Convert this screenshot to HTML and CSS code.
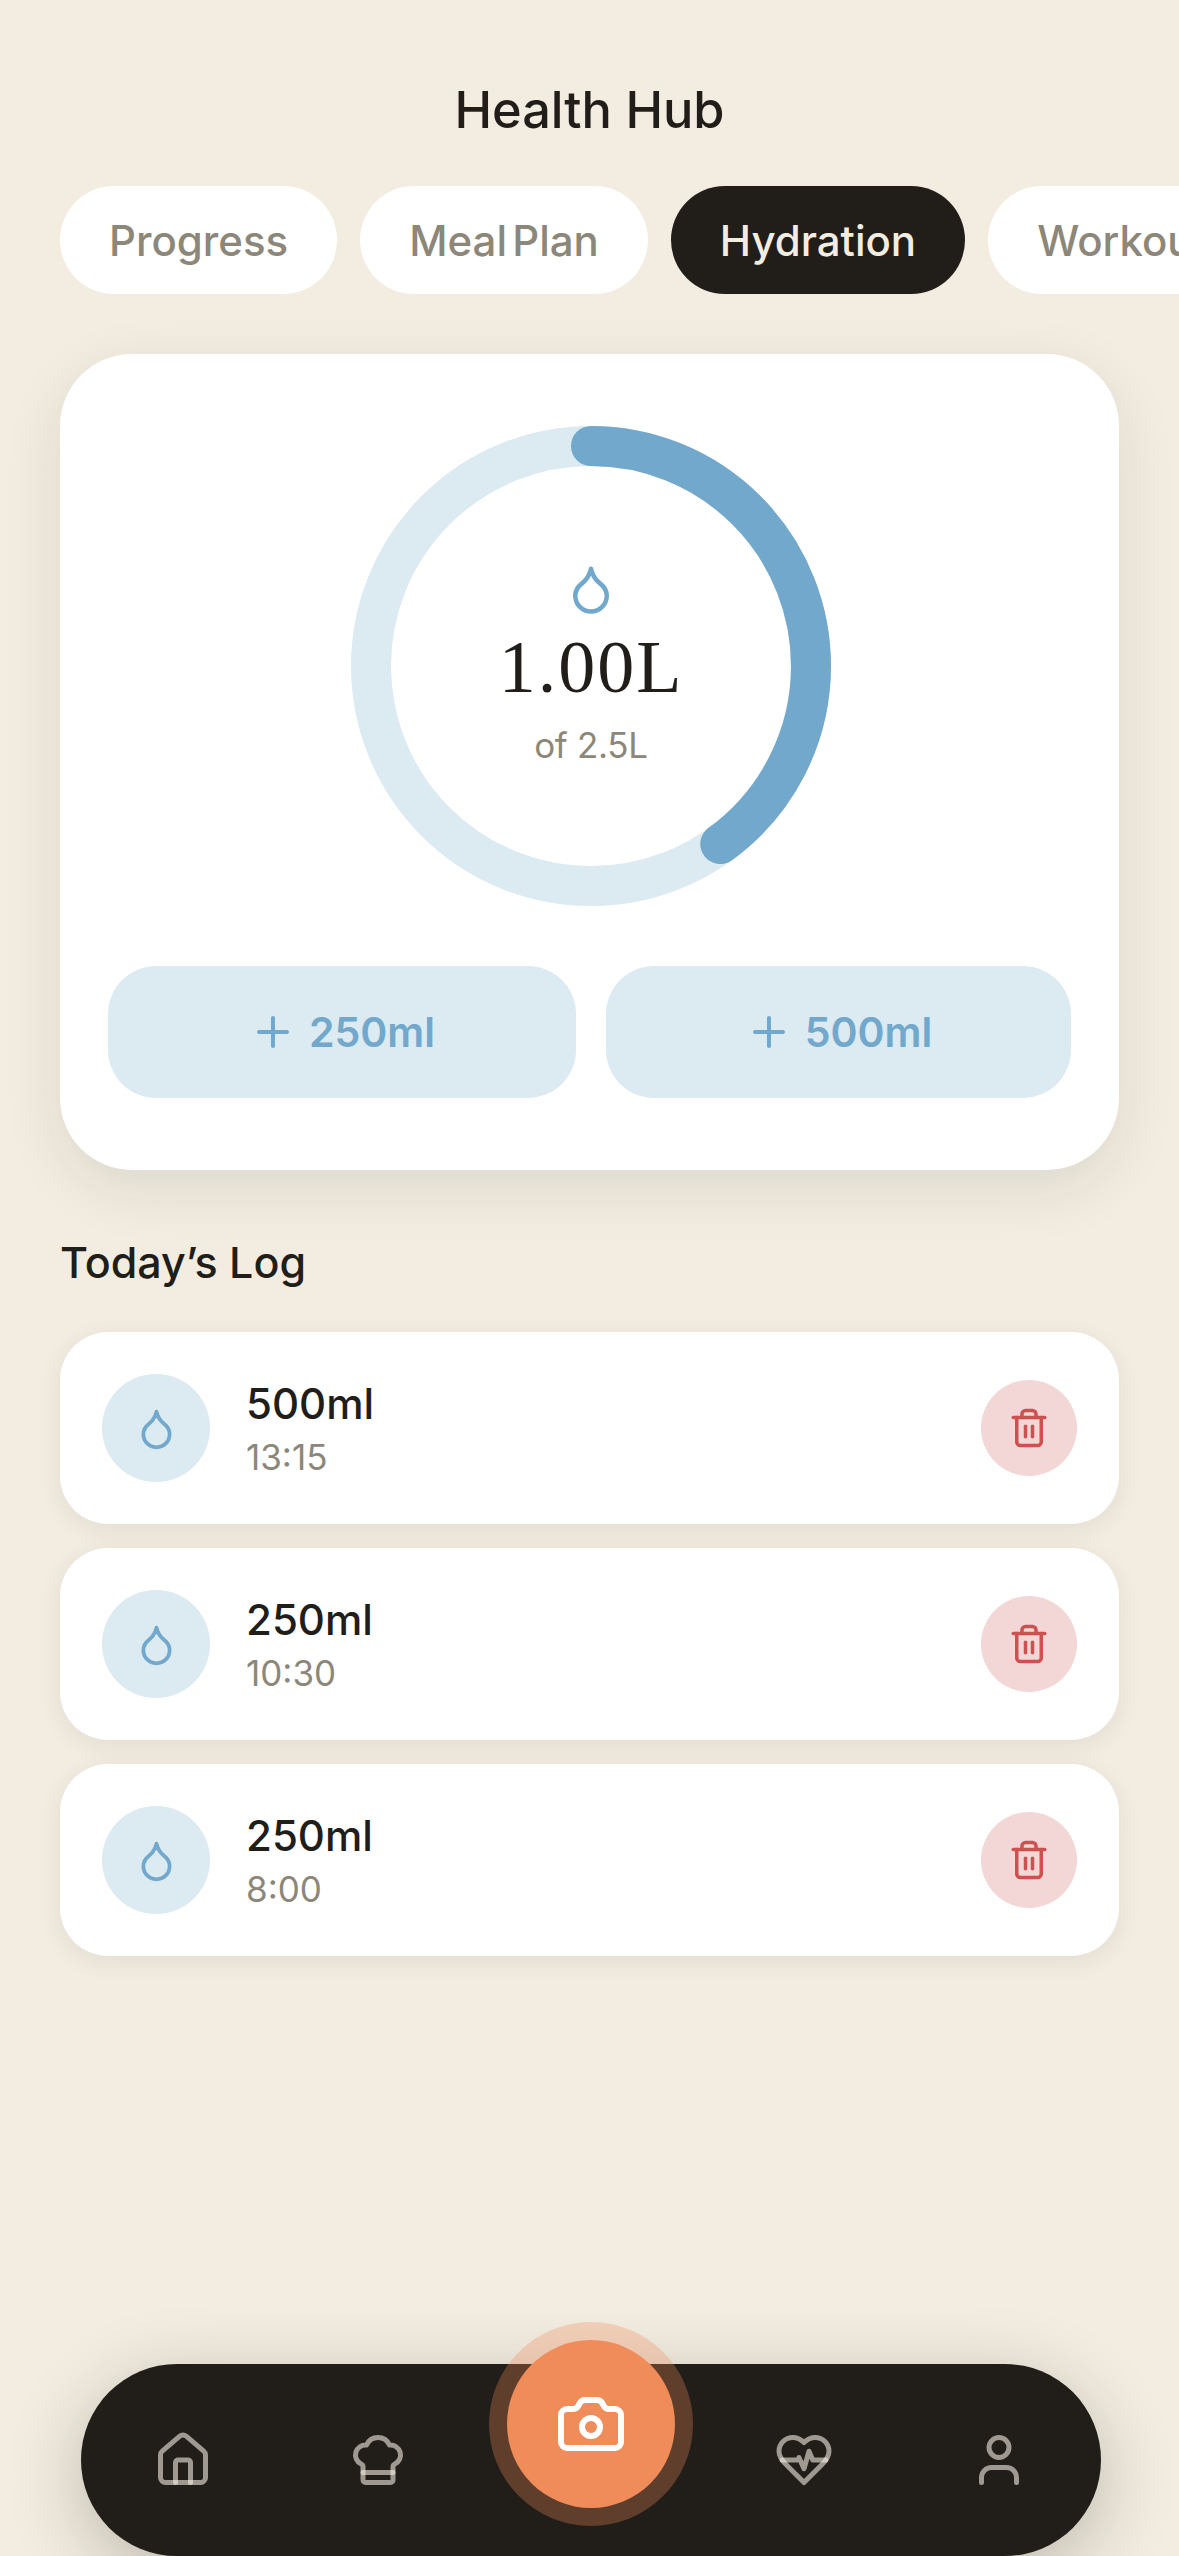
FILE: index.html
```html
<!DOCTYPE html>
<html lang="en">
<head>
    <meta charset="UTF-8">
    <meta name="viewport" content="width=device-width, initial-scale=1.0">
    <title>Health Hub</title>
    <link rel="stylesheet" href="styles.css">
</head>
<body>
    <div class="page">
        <h1 class="page-title">Health Hub</h1>

        <div class="tabs">
            <button class="tab">Progress</button>
            <button class="tab">Meal Plan</button>
            <button class="tab active">Hydration</button>
            <button class="tab">Workout</button>
        </div>

        <section class="water-card">
            <div class="ring">
                <svg class="ring-chart" width="480" height="480" viewBox="0 0 480 480" fill="none" stroke-width="40">
                    <circle class="ring-track" cx="240" cy="240" r="220"></circle>
                    <circle class="ring-value" cx="240" cy="240" r="220" pathLength="100" stroke-dasharray="40 100" stroke-linecap="round"></circle>
                </svg>
                <div class="ring-label">
                    <svg class="ring-drop" viewBox="0 0 24 24" fill="none" stroke="currentColor" stroke-width="2" stroke-linecap="round" stroke-linejoin="round">
                        <path d="M12 22a7 7 0 0 0 7-7c0-2-1-3.9-3-5.5s-3.5-4-4-6.5c-.5 2.5-2 4.9-4 6.5C6 11.1 5 13 5 15a7 7 0 0 0 7 7z"></path>
                    </svg>
                    <div class="ring-amount">1.00L</div>
                    <div class="ring-goal">of 2.5L</div>
                </div>
            </div>
            <div class="add-row">
                <button class="add-btn">
                    <svg viewBox="0 0 24 24" fill="none" stroke="currentColor" stroke-width="2" stroke-linecap="round" stroke-linejoin="round">
                        <path d="M5 12h14"></path>
                        <path d="M12 5v14"></path>
                    </svg>
                    250ml
                </button>
                <button class="add-btn">
                    <svg viewBox="0 0 24 24" fill="none" stroke="currentColor" stroke-width="2" stroke-linecap="round" stroke-linejoin="round">
                        <path d="M5 12h14"></path>
                        <path d="M12 5v14"></path>
                    </svg>
                    500ml
                </button>
            </div>
        </section>

        <h2 class="log-title">Today’s Log</h2>

        <div class="log">
            <div class="log-item">
                <div class="log-icon">
                    <svg viewBox="0 0 24 24" fill="none" stroke="currentColor" stroke-width="2" stroke-linecap="round" stroke-linejoin="round">
                        <path d="M12 22a7 7 0 0 0 7-7c0-2-1-3.9-3-5.5s-3.5-4-4-6.5c-.5 2.5-2 4.9-4 6.5C6 11.1 5 13 5 15a7 7 0 0 0 7 7z"></path>
                    </svg>
                </div>
                <div class="log-text">
                    <div class="log-amount">500ml</div>
                    <div class="log-time">13:15</div>
                </div>
                <button class="delete-btn">
                    <svg viewBox="0 0 24 24" fill="none" stroke="currentColor" stroke-width="2" stroke-linecap="round" stroke-linejoin="round">
                        <path d="M3 6h18"></path>
                        <path d="M19 6v14c0 1-1 2-2 2H7c-1 0-2-1-2-2V6"></path>
                        <path d="M8 6V4c0-1 1-2 2-2h4c1 0 2 1 2 2v2"></path>
                        <line x1="10" y1="11" x2="10" y2="17"></line>
                        <line x1="14" y1="11" x2="14" y2="17"></line>
                    </svg>
                </button>
            </div>
            <div class="log-item">
                <div class="log-icon">
                    <svg viewBox="0 0 24 24" fill="none" stroke="currentColor" stroke-width="2" stroke-linecap="round" stroke-linejoin="round">
                        <path d="M12 22a7 7 0 0 0 7-7c0-2-1-3.9-3-5.5s-3.5-4-4-6.5c-.5 2.5-2 4.9-4 6.5C6 11.1 5 13 5 15a7 7 0 0 0 7 7z"></path>
                    </svg>
                </div>
                <div class="log-text">
                    <div class="log-amount">250ml</div>
                    <div class="log-time">10:30</div>
                </div>
                <button class="delete-btn">
                    <svg viewBox="0 0 24 24" fill="none" stroke="currentColor" stroke-width="2" stroke-linecap="round" stroke-linejoin="round">
                        <path d="M3 6h18"></path>
                        <path d="M19 6v14c0 1-1 2-2 2H7c-1 0-2-1-2-2V6"></path>
                        <path d="M8 6V4c0-1 1-2 2-2h4c1 0 2 1 2 2v2"></path>
                        <line x1="10" y1="11" x2="10" y2="17"></line>
                        <line x1="14" y1="11" x2="14" y2="17"></line>
                    </svg>
                </button>
            </div>
            <div class="log-item">
                <div class="log-icon">
                    <svg viewBox="0 0 24 24" fill="none" stroke="currentColor" stroke-width="2" stroke-linecap="round" stroke-linejoin="round">
                        <path d="M12 22a7 7 0 0 0 7-7c0-2-1-3.9-3-5.5s-3.5-4-4-6.5c-.5 2.5-2 4.9-4 6.5C6 11.1 5 13 5 15a7 7 0 0 0 7 7z"></path>
                    </svg>
                </div>
                <div class="log-text">
                    <div class="log-amount">250ml</div>
                    <div class="log-time">8:00</div>
                </div>
                <button class="delete-btn">
                    <svg viewBox="0 0 24 24" fill="none" stroke="currentColor" stroke-width="2" stroke-linecap="round" stroke-linejoin="round">
                        <path d="M3 6h18"></path>
                        <path d="M19 6v14c0 1-1 2-2 2H7c-1 0-2-1-2-2V6"></path>
                        <path d="M8 6V4c0-1 1-2 2-2h4c1 0 2 1 2 2v2"></path>
                        <line x1="10" y1="11" x2="10" y2="17"></line>
                        <line x1="14" y1="11" x2="14" y2="17"></line>
                    </svg>
                </button>
            </div>
        </div>

        <nav class="bottom-nav">
            <svg class="nav-icon" viewBox="0 0 24 24" fill="none" stroke-width="2" stroke-linecap="round" stroke-linejoin="round">
                <path d="M15 21v-8a1 1 0 0 0-1-1h-4a1 1 0 0 0-1 1v8"></path>
                <path d="M3 10a2 2 0 0 1 .709-1.528l7-5.999a2 2 0 0 1 2.582 0l7 5.999A2 2 0 0 1 21 10v9a2 2 0 0 1-2 2H5a2 2 0 0 1-2-2z"></path>
            </svg>
            <svg class="nav-icon" viewBox="0 0 24 24" fill="none" stroke-width="2" stroke-linecap="round" stroke-linejoin="round">
                <path d="M17 21a1 1 0 0 0 1-1v-5.35c0-.457.316-.844.727-1.041a4 4 0 0 0-2.134-7.589 5 5 0 0 0-9.186 0 4 4 0 0 0-2.134 7.588c.411.198.727.585.727 1.041V20a1 1 0 0 0 1 1Z"></path>
                <path d="M6 17h12"></path>
            </svg>
            <div class="nav-slot">
                <button class="camera-btn">
                    <svg viewBox="0 0 24 24" fill="none" stroke="currentColor" stroke-width="2" stroke-linecap="round" stroke-linejoin="round">
                        <path d="M13.997 4a2 2 0 0 1 1.76 1.05l.486.9A2 2 0 0 0 18.003 7H20a2 2 0 0 1 2 2v9a2 2 0 0 1-2 2H4a2 2 0 0 1-2-2V9a2 2 0 0 1 2-2h1.997a2 2 0 0 0 1.759-1.048l.489-.904A2 2 0 0 1 10.004 4z"></path>
                        <circle cx="12" cy="13" r="3"></circle>
                    </svg>
                </button>
            </div>
            <svg class="nav-icon" viewBox="0 0 24 24" fill="none" stroke-width="2" stroke-linecap="round" stroke-linejoin="round">
                <path d="M19 14c1.49-1.46 3-3.21 3-5.5A5.5 5.5 0 0 0 16.5 3c-1.76 0-3 .5-4.5 2-1.5-1.5-2.74-2-4.5-2A5.5 5.5 0 0 0 2 8.5c0 2.3 1.5 4.05 3 5.5l7 7Z"></path>
                <path d="M3.22 12H9.5l.5-1 2 4.5 2-7 1.5 3.5h5.27"></path>
            </svg>
            <svg class="nav-icon" viewBox="0 0 24 24" fill="none" stroke-width="2" stroke-linecap="round" stroke-linejoin="round">
                <path d="M19 21v-2a4 4 0 0 0-4-4H9a4 4 0 0 0-4 4v2"></path>
                <circle cx="12" cy="7" r="4"></circle>
            </svg>
        </nav>
    </div>
</body>
</html>
```

FILE: styles.css
```css
:root {
    --cream: #f3ede1;
    --ink: #211d19;
    --muted: #8c8779;
    --blue: #71a8cb;
    --light-blue: #dceaf1;
    --red: #cf5050;
    --light-red: #f3d6d6;
    --orange: #ef8c5a;
}

* {
    margin: 0;
    padding: 0;
    box-sizing: border-box;
}

body {
    font-family: Inter, "Noto Sans", sans-serif;
    background: var(--cream);
    color: var(--ink);
    overflow: hidden;
}

button {
    border: none;
    font-family: inherit;
}

.page {
    height: 2556px;
    display: flex;
    flex-direction: column;
    padding: 0 60px;
    overflow: hidden;
}

.page-title {
    font-size: 50.5px;
    font-weight: 500;
    line-height: 60px;
    text-align: center;
    margin-top: 80px;
}

.tabs {
    display: flex;
    gap: 23px;
    margin-top: 46px;
    margin-right: -60px;
}

.tab {
    flex-shrink: 0;
    height: 108px;
    padding: 0 49px;
    border-radius: 54px;
    background: #fff;
    color: var(--muted);
    font-size: 42px;
    font-weight: 500;
    word-spacing: -6px;
}

.tab.active {
    background: var(--ink);
    color: var(--cream);
}

.water-card {
    margin-top: 60px;
    padding: 72px 48px;
    background: #fff;
    border-radius: 72px;
    box-shadow: 0 18px 60px rgba(33, 29, 25, 0.1);
}

.ring {
    position: relative;
    width: 480px;
    height: 480px;
    margin-left: 243px;
}

.ring-chart {
    display: block;
    transform: rotate(-90deg);
}

.ring-track {
    stroke: var(--light-blue);
}

.ring-value {
    stroke: var(--blue);
}

.ring-label {
    position: absolute;
    inset: 0;
    display: flex;
    flex-direction: column;
    align-items: center;
    padding-top: 136px;
}

.ring-drop {
    width: 54px;
    height: 54px;
    color: var(--blue);
}

.ring-amount {
    font-family: "Liberation Serif", serif;
    font-size: 74px;
    line-height: 84px;
    letter-spacing: 2px;
    margin-top: 9px;
}

.ring-goal {
    font-size: 35px;
    line-height: 44px;
    letter-spacing: -0.3px;
    color: var(--muted);
    margin-top: 14px;
}

.add-row {
    display: flex;
    gap: 30px;
    margin-top: 60px;
}

.add-btn {
    flex: 1;
    height: 132px;
    display: flex;
    align-items: center;
    justify-content: center;
    gap: 12px;
    border-radius: 48px;
    background: var(--light-blue);
    color: var(--blue);
    font-size: 41px;
    font-weight: 600;
}

.add-btn:first-child {
    flex: none;
    width: 468px;
}

.add-btn svg {
    width: 48px;
    height: 48px;
}

.log-title {
    font-size: 43px;
    font-weight: 500;
    line-height: 54px;
    margin-top: 65px;
}

.log {
    display: flex;
    flex-direction: column;
    gap: 24px;
    margin-top: 43px;
}

.log-item {
    height: 192px;
    display: flex;
    align-items: center;
    padding: 0 42px;
    background: #fff;
    border-radius: 48px;
    box-shadow: 0 6px 24px rgba(33, 29, 25, 0.08);
}

.log-icon {
    width: 108px;
    height: 108px;
    display: flex;
    align-items: center;
    justify-content: center;
    border-radius: 50%;
    background: var(--light-blue);
    color: var(--blue);
}

.log-icon svg {
    width: 45px;
    height: 45px;
}

.log-text {
    flex: 1;
    margin-left: 36px;
}

.log-amount {
    font-size: 42px;
    font-weight: 500;
    line-height: 52px;
}

.log-time {
    font-size: 35px;
    line-height: 44px;
    color: var(--muted);
    margin-top: 5px;
}

.delete-btn {
    width: 96px;
    height: 96px;
    display: flex;
    align-items: center;
    justify-content: center;
    border-radius: 50%;
    background: var(--light-red);
    color: var(--red);
}

.delete-btn svg {
    width: 42px;
    height: 42px;
}

.bottom-nav {
    flex-shrink: 0;
    height: 192px;
    margin: auto 18px 0 21px;
    padding: 0 72px;
    display: flex;
    align-items: center;
    justify-content: space-between;
    background: var(--ink);
    border-radius: 96px;
    box-shadow: 0 18px 72px rgba(33, 29, 25, 0.25);
}

.nav-icon {
    width: 60px;
    height: 60px;
    stroke: rgba(243, 237, 225, 0.6);
}

.nav-slot {
    position: relative;
    width: 96px;
    height: 60px;
}

.camera-btn {
    position: absolute;
    left: -36px;
    top: -90px;
    width: 168px;
    height: 168px;
    display: flex;
    align-items: center;
    justify-content: center;
    border-radius: 50%;
    background: var(--orange);
    color: #fff;
    box-shadow: 0 0 0 18px rgba(239, 140, 90, 0.3);
}

.camera-btn svg {
    width: 72px;
    height: 72px;
}
```
